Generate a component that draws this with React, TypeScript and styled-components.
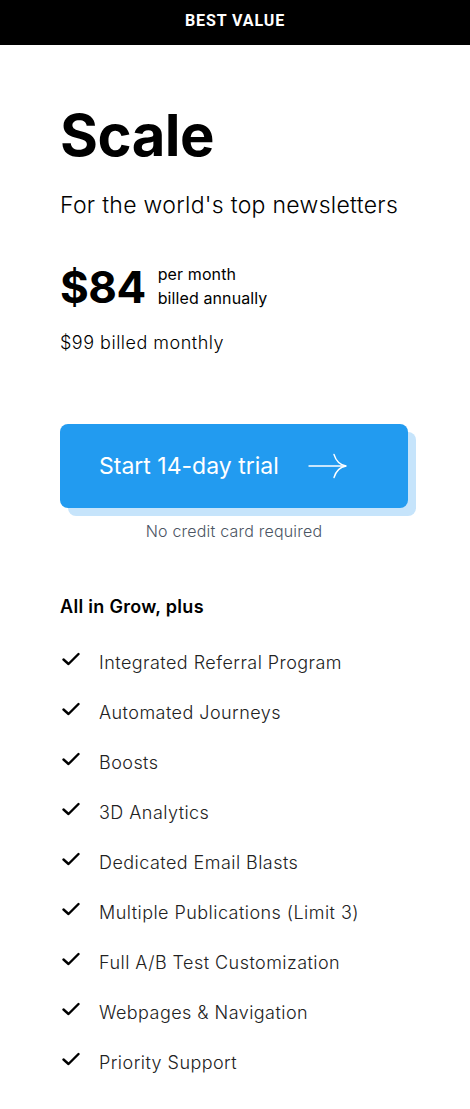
import React from "react";
import styled, { createGlobalStyle } from "styled-components";

const Global = createGlobalStyle`
  html, body { margin: 0; padding: 0; background: #fff; }
  body { font-family: Inter, "Noto Sans", sans-serif; color: #000; }
  * { box-sizing: border-box; }
`;

const Page = styled.div`
  width: 470px;
  min-height: 1109px;
  background: #fff;
`;

const Banner = styled.div`
  height: 45px;
  background: #000;
  color: #fff;
  display: flex;
  align-items: center;
  justify-content: center;
  font-family: Roboto, "Liberation Sans", sans-serif;
  font-weight: 700;
  font-size: 16px;
  letter-spacing: 0.9px;
  padding-bottom: 4px;
`;

const Body = styled.div`
  padding: 55px 0 0 60px;
  display: flex;
  flex-direction: column;
`;

const Title = styled.h1`
  margin: 0;
  font-family: Inter, sans-serif;
  font-weight: 700;
  font-size: 58px;
  line-height: 70px;
  letter-spacing: -0.5px;
`;

const Subtitle = styled.p`
  margin: 20px 0 0;
  font-weight: 300;
  font-size: 23px;
  line-height: 30px;
  letter-spacing: 0.3px;
`;

const PriceRow = styled.div`
  display: flex;
  align-items: center;
  gap: 12px;
  margin-top: 41px;
`;

const Price = styled.span`
  font-weight: 700;
  font-size: 44px;
  line-height: 52px;
  letter-spacing: -0.5px;
`;

const PriceNote = styled.div`
  font-size: 16px;
  line-height: 24px;
  font-weight: 400;
  letter-spacing: 0.1px;
  padding-bottom: 2px;
`;

const Monthly = styled.p`
  margin: 17px 0 0;
  font-size: 18px;
  font-weight: 300;
  line-height: 26px;
  letter-spacing: 0.5px;
`;

const CtaWrap = styled.div`
  position: relative;
  width: 348px;
  height: 84px;
  margin-top: 68px;
`;

const CtaShadow = styled.div`
  position: absolute;
  left: 8px;
  top: 8px;
  width: 348px;
  height: 84px;
  border-radius: 8px;
  background: #c6e4fb;
`;

const CtaButton = styled.button`
  position: relative;
  width: 348px;
  height: 84px;
  border: none;
  border-radius: 8px;
  background: #229bf0;
  color: #fff;
  display: flex;
  align-items: center;
  gap: 29px;
  padding: 0 0 0 39px;
  font-family: Inter, sans-serif;
  font-size: 23px;
  font-weight: 400;
  cursor: pointer;
`;

const NoCard = styled.p`
  margin: 13px 0 0;
  width: 348px;
  text-align: center;
  font-size: 16px;
  font-weight: 300;
  color: #4b5563;
  line-height: 20px;
  letter-spacing: 0.2px;
`;

const FeatureHead = styled.h3`
  margin: 54px 0 0;
  font-size: 18px;
  font-weight: 600;
  line-height: 24px;
  letter-spacing: 0.3px;
`;

const List = styled.ul`
  list-style: none;
  margin: 18px 0 0;
  padding: 0;
  display: flex;
  flex-direction: column;
`;

const Item = styled.li`
  display: flex;
  align-items: center;
  height: 50px;
  font-size: 18px;
  font-weight: 300;
  letter-spacing: 0.45px;
  color: #222;
`;

const CheckBox = styled.span`
  width: 39px;
  display: flex;
  align-items: center;
  padding-left: 2px;
  margin-top: -6px;
`;

const features = [
  "Integrated Referral Program",
  "Automated Journeys",
  "Boosts",
  "3D Analytics",
  "Dedicated Email Blasts",
  "Multiple Publications (Limit 3)",
  "Full A/B Test Customization",
  "Webpages & Navigation",
  "Priority Support",
];

const Check = () => (
  <svg width="18" height="14" viewBox="0 0 18 14" fill="none">
    <path d="M1.5 7.5 L6.5 12 L16.5 2" stroke="#000" strokeWidth="2.4" strokeLinecap="round" strokeLinejoin="round" />
  </svg>
);

const Arrow = () => (
  <svg width="40" height="26" viewBox="0 0 40 26" fill="none">
    <path d="M1 13 H38" stroke="#fff" strokeWidth="1.4" strokeLinecap="round" />
    <path d="M26 1.5 C28 8 32 12 38 13 C32 14 28 18 26 24.5" stroke="#fff" strokeWidth="1.4" strokeLinecap="round" fill="none" />
  </svg>
);

export default function App() {
  return (
    <Page>
      <Global />
      <Banner>BEST VALUE</Banner>
      <Body>
        <Title>Scale</Title>
        <Subtitle>For the world's top newsletters</Subtitle>
        <PriceRow>
          <Price>$84</Price>
          <PriceNote>
            per month
            <br />
            billed annually
          </PriceNote>
        </PriceRow>
        <Monthly>$99 billed monthly</Monthly>
        <CtaWrap>
          <CtaShadow />
          <CtaButton>
            Start 14-day trial
            <Arrow />
          </CtaButton>
        </CtaWrap>
        <NoCard>No credit card required</NoCard>
        <FeatureHead>All in Grow, plus</FeatureHead>
        <List>
          {features.map((f) => (
            <Item key={f}>
              <CheckBox>
                <Check />
              </CheckBox>
              {f}
            </Item>
          ))}
        </List>
      </Body>
    </Page>
  );
}
